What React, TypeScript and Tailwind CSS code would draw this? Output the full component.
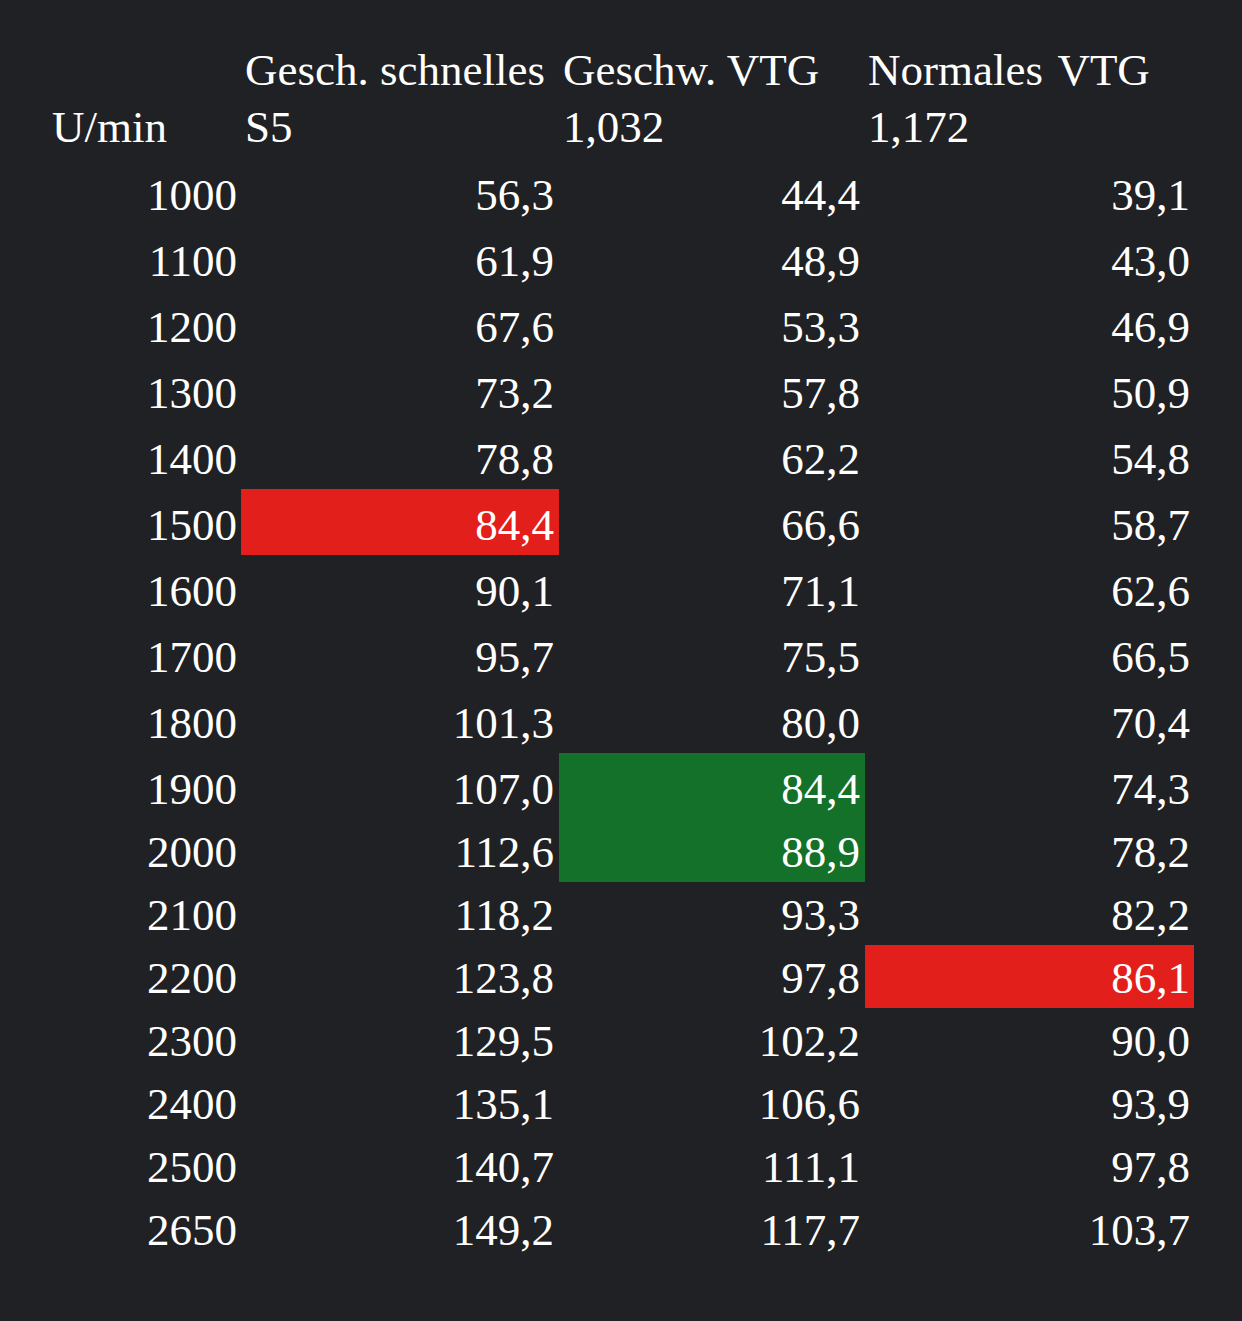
import React from "react";

type Hl = "red" | "green" | null;
type Row = { rpm: string; a: string; b: string; c: string; ha?: Hl; hb?: Hl; hc?: Hl; tall: boolean };

const rows: Row[] = [
  { rpm: "1000", a: "56,3", b: "44,4", c: "39,1", tall: true },
  { rpm: "1100", a: "61,9", b: "48,9", c: "43,0", tall: true },
  { rpm: "1200", a: "67,6", b: "53,3", c: "46,9", tall: true },
  { rpm: "1300", a: "73,2", b: "57,8", c: "50,9", tall: true },
  { rpm: "1400", a: "78,8", b: "62,2", c: "54,8", tall: true },
  { rpm: "1500", a: "84,4", b: "66,6", c: "58,7", ha: "red", tall: true },
  { rpm: "1600", a: "90,1", b: "71,1", c: "62,6", tall: true },
  { rpm: "1700", a: "95,7", b: "75,5", c: "66,5", tall: true },
  { rpm: "1800", a: "101,3", b: "80,0", c: "70,4", tall: true },
  { rpm: "1900", a: "107,0", b: "84,4", c: "74,3", hb: "green", tall: true },
  { rpm: "2000", a: "112,6", b: "88,9", c: "78,2", hb: "green", tall: false },
  { rpm: "2100", a: "118,2", b: "93,3", c: "82,2", tall: false },
  { rpm: "2200", a: "123,8", b: "97,8", c: "86,1", hc: "red", tall: false },
  { rpm: "2300", a: "129,5", b: "102,2", c: "90,0", tall: false },
  { rpm: "2400", a: "135,1", b: "106,6", c: "93,9", tall: false },
  { rpm: "2500", a: "140,7", b: "111,1", c: "97,8", tall: false },
  { rpm: "2650", a: "149,2", b: "117,7", c: "103,7", tall: false },
];

function bg(h?: Hl) {
  if (h === "red") return "bg-[#e31f1c]";
  if (h === "green") return "bg-[#147129]";
  return "";
}

export default function App() {
  return (
    <div className="min-h-[1321px] w-full bg-[#202124] text-white pt-[42px] pl-[48px] font-['Liberation_Serif','Times_New_Roman',serif]">
      <table className="border-collapse text-[45px] leading-[57px]">
        <colgroup>
          <col className="w-[193px]" />
          <col className="w-[318px]" />
          <col className="w-[306px]" />
          <col className="w-[329px]" />
        </colgroup>
        <thead>
          <tr className="h-[117px]">
            <th className="p-0 align-bottom text-left font-normal pl-[4px] pb-[3px]">U/min</th>
            <th className="p-0 align-bottom text-left font-normal pl-[4px] pb-[3px] whitespace-nowrap">
              Gesch. schnelles
              <br />
              S5
            </th>
            <th className="p-0 align-bottom text-left font-normal pl-[4px] pb-[3px] whitespace-nowrap">
              Geschw. VTG
              <br />
              1,032
            </th>
            <th className="p-0 align-bottom text-left font-normal pl-[3px] pb-[3px] whitespace-nowrap [word-spacing:4px]">
              Normales VTG
              <br />
              1,172
            </th>
          </tr>
        </thead>
        <tbody>
          {rows.map((r) => {
            const cell = r.tall ? "h-[66px] pt-[6px] leading-[60px]" : "h-[63px] pt-[4px] leading-[59px]";
            return (
              <tr key={r.rpm}>
                <td className={`p-0 pr-[4px] text-right align-top ${cell}`}>{r.rpm}</td>
                <td className={`p-0 pr-[5px] text-right align-top ${cell} ${bg(r.ha)}`}>{r.a}</td>
                <td className={`p-0 pr-[5px] text-right align-top ${cell} ${bg(r.hb)}`}>{r.b}</td>
                <td className={`p-0 pr-[4px] text-right align-top ${cell} ${bg(r.hc)}`}>{r.c}</td>
              </tr>
            );
          })}
        </tbody>
      </table>
    </div>
  );
}
